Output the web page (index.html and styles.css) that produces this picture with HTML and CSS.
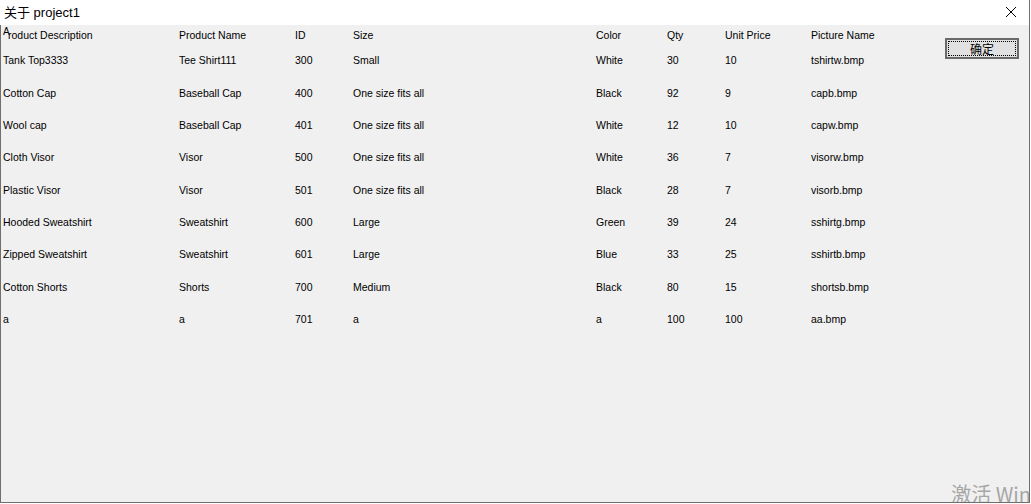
FILE: index.html
```html
<!DOCTYPE html>
<html>
<head>
<meta charset="utf-8">
<link rel="stylesheet" href="styles.css">
</head>
<body>
<div class="window">
  <div class="titlebar">
    <span class="title">关于 project1</span>
    <svg class="close" width="12" height="12" viewBox="0 0 12 12"><path d="M1 1 L11 11 M11 1 L1 11" stroke="#000" stroke-width="1" fill="none"/></svg>
  </div>
  <div class="client">
    <div class="table">
      <div class="row head">
        <div class="c1"><span class="sup">A</span>roduct Description</div><div>Product Name</div><div>ID</div><div>Size</div><div>Color</div><div>Qty</div><div>Unit Price</div><div>Picture Name</div>
      </div>
      <div class="row"><div class="c1">Tank Top3333</div><div>Tee Shirt111</div><div>300</div><div>Small</div><div>White</div><div>30</div><div>10</div><div>tshirtw.bmp</div></div>
      <div class="row"><div class="c1">Cotton Cap</div><div>Baseball Cap</div><div>400</div><div>One size fits all</div><div>Black</div><div>92</div><div>9</div><div>capb.bmp</div></div>
      <div class="row"><div class="c1">Wool cap</div><div>Baseball Cap</div><div>401</div><div>One size fits all</div><div>White</div><div>12</div><div>10</div><div>capw.bmp</div></div>
      <div class="row"><div class="c1">Cloth Visor</div><div>Visor</div><div>500</div><div>One size fits all</div><div>White</div><div>36</div><div>7</div><div>visorw.bmp</div></div>
      <div class="row"><div class="c1">Plastic Visor</div><div>Visor</div><div>501</div><div>One size fits all</div><div>Black</div><div>28</div><div>7</div><div>visorb.bmp</div></div>
      <div class="row"><div class="c1">Hooded Sweatshirt</div><div>Sweatshirt</div><div>600</div><div>Large</div><div>Green</div><div>39</div><div>24</div><div>sshirtg.bmp</div></div>
      <div class="row"><div class="c1">Zipped Sweatshirt</div><div>Sweatshirt</div><div>601</div><div>Large</div><div>Blue</div><div>33</div><div>25</div><div>sshirtb.bmp</div></div>
      <div class="row"><div class="c1">Cotton Shorts</div><div>Shorts</div><div>700</div><div>Medium</div><div>Black</div><div>80</div><div>15</div><div>shortsb.bmp</div></div>
      <div class="row"><div class="c1">a</div><div>a</div><div>701</div><div>a</div><div>a</div><div>100</div><div>100</div><div>aa.bmp</div></div>
    </div>
    <div class="side">
      <button class="ok"><span class="focus">确定</span></button>
    </div>
    <div class="watermark">激活 Win</div>
  </div>
</div>
</body>
</html>
```
FILE: styles.css
```css
html, body {
  margin: 0;
  padding: 0;
  background: #ffffff;
}
body {
  width: 1031px;
  height: 504px;
  overflow: hidden;
  font-family: "Liberation Sans", Arial, sans-serif;
}
.window {
  width: 1029px;
  height: 502px;
  border-right: 1px solid #6f6f6f;
  border-bottom: 1px solid #6f6f6f;
  display: flex;
  flex-direction: column;
  background: #f0f0f0;
}
.titlebar {
  height: 25px;
  background: #ffffff;
  display: flex;
  align-items: center;
  justify-content: space-between;
  padding: 0 12px 0 4px;
  flex: none;
}
.title {
  font-family: "Liberation Sans", "Noto Sans CJK SC", sans-serif;
  font-size: 13px;
  color: #000;
  position: relative;
  top: -1px;
}
.close {
  display: block;
  position: relative;
  top: -1px;
}
.client {
  flex: 1;
  display: flex;
  border-left: 1px solid #6f6f6f;
  position: relative;
  overflow: hidden;
}
.table {
  width: 942px;
  flex: none;
  font-size: 10.5px;
  color: #000;
  padding-left: 2px;
}
.row {
  display: grid;
  grid-template-columns: 176px 116px 58px 243px 71px 58px 86px 134px;
  height: 32.375px;
  align-items: center;
}
.row.head {
  height: 19px;
}
.sup {
  display: inline-block;
  font-size: 10px;
  position: relative;
  top: -4px;
  width: 5px;
}
.side {
  padding-top: 13px;
}
.ok {
  width: 74px;
  height: 21px;
  background: #e1e1e1;
  border: 1px solid #6a6a6a;
  box-shadow: inset 0 0 0 1px #6a6a6a;
  padding: 2px;
  margin: 0;
  display: flex;
}
.focus {
  flex: 1;
  border: 1px dotted #000;
  font-family: "Noto Sans CJK SC", sans-serif;
  font-size: 12px;
  line-height: 13px;
  color: #000;
  display: flex;
  align-items: center;
  justify-content: center;
}
.watermark {
  position: absolute;
  right: -2px;
  bottom: -6px;
  font-family: "Noto Sans CJK SC", "Liberation Sans", sans-serif;
  font-size: 20px;
  color: #a6a6a6;
  white-space: nowrap;
}
```
